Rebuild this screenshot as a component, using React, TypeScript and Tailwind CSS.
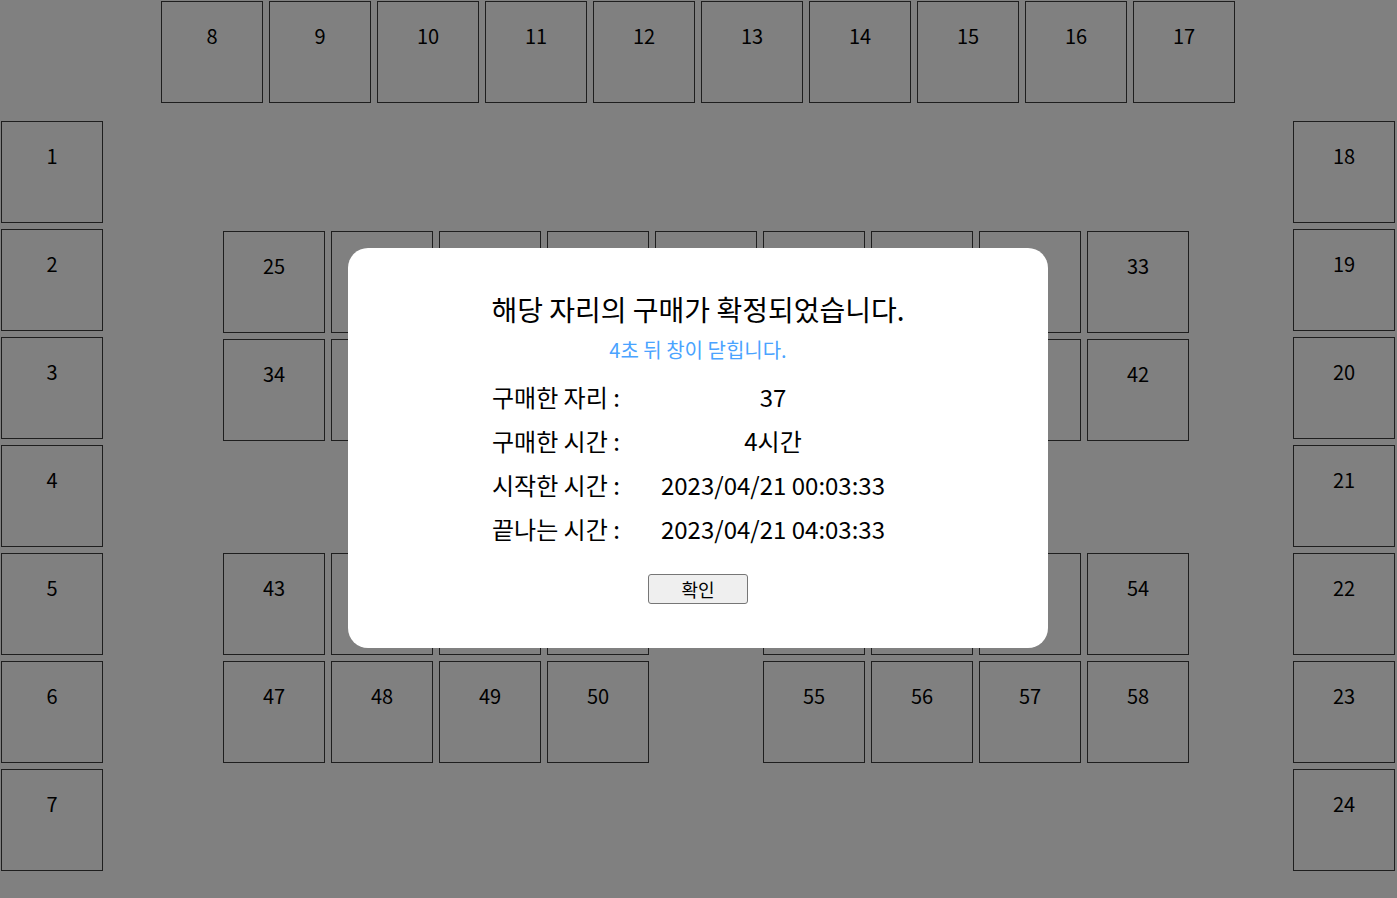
import React from "react";

const font = { fontFamily: '"Noto Sans CJK KR", "Noto Sans", sans-serif' };

function Seat({ n }: { n?: number }) {
  if (n === undefined) return <div className="w-[102px] h-[102px]" />;
  return (
    <div className="w-[102px] h-[102px] border border-[#1e1e1e] text-center pt-[19px] text-[20px] leading-[29px] text-black">
      {n}
    </div>
  );
}

const range = (a: number, b: number) => Array.from({ length: b - a + 1 }, (_, i) => a + i);

export default function App() {
  const side = range(1, 7);
  const right = range(18, 24);
  const top = range(8, 17);
  const midRows: (number | undefined)[][] = [
    range(25, 33),
    range(34, 42),
    [],
    [43, 44, 45, 46, undefined, 51, 52, 53, 54],
    [47, 48, 49, 50, undefined, 55, 56, 57, 58],
  ];
  return (
    <div className="w-[1397px] h-[898px] bg-[#808080] relative overflow-hidden" style={font}>
      {/* top row */}
      <div className="flex gap-[6px] pl-[161px] pt-[1px]">
        {top.map((n) => (
          <Seat key={n} n={n} />
        ))}
      </div>
      <div className="flex mt-[18px] pl-[1px]">
        <div className="flex flex-col gap-[6px]">
          {side.map((n) => (
            <Seat key={n} n={n} />
          ))}
        </div>
        <div className="flex flex-col gap-[6px] ml-[120px] mt-[110px]">
          {midRows.map((row, i) => (
            <div key={i} className={`flex gap-[6px] ${i === 2 ? "h-[100px]" : ""}`}>
              {row.map((n, j) => (
                <Seat key={j} n={n} />
              ))}
            </div>
          ))}
        </div>
        <div className="flex flex-col gap-[6px] ml-[104px]">
          {right.map((n) => (
            <Seat key={n} n={n} />
          ))}
        </div>
      </div>

      {/* modal */}
      <div className="absolute left-[348px] top-[248px] w-[700px] h-[400px] bg-white rounded-[20px] flex flex-col items-center pt-[42px]">
        <div className="text-[28px] leading-[38px] text-black whitespace-nowrap">해당 자리의 구매가 확정되었습니다.</div>
        <div className="text-[20px] leading-[28px] text-[#4aa3ff] mt-[8px] whitespace-nowrap">4초 뒤 창이 닫힙니다.</div>
        <div className="w-[412px] grid grid-cols-[150px_1fr] mt-[11px] text-[24px] leading-[44px] text-black whitespace-nowrap">
          <div>구매한 자리 :</div>
          <div className="text-center">37</div>
          <div>구매한 시간 :</div>
          <div className="text-center">4시간</div>
          <div>시작한 시간 :</div>
          <div className="text-center">2023/04/21 00:03:33</div>
          <div>끝나는 시간 :</div>
          <div className="text-center">2023/04/21 04:03:33</div>
        </div>
        <button className="mt-[23px] w-[100px] h-[30px] bg-[#efefef] border border-[#767676] rounded-[3px] text-[18px] leading-[26px] text-black">
          확인
        </button>
      </div>
    </div>
  );
}
